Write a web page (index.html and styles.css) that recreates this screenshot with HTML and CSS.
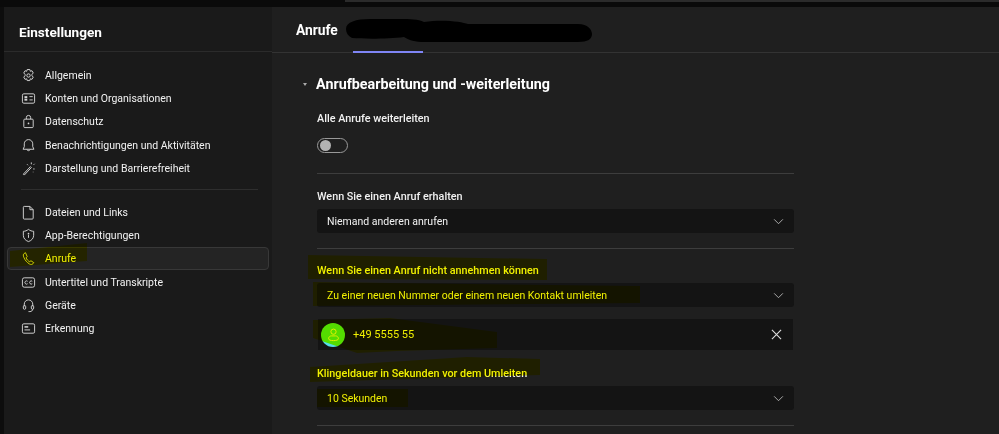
FILE: index.html
```html
<!DOCTYPE html>
<html lang="de">
<head>
    <meta charset="UTF-8">
    <title>Einstellungen</title>
    <link rel="stylesheet" href="styles.css">
</head>
<body>
    <div class="topbar"><div class="topbar-line"></div></div>
    <div class="window">
        <aside class="sidebar">
            <h1 class="sidebar-title">Einstellungen</h1>
            <nav class="nav">
                <a class="nav-item"><svg class="nav-icon" viewBox="0 0 16 16"><path d="M6.6 1.6h2.8l.5 1.9 1.8-.6 1.4 2.4-1.4 1.4v1.6l1.4 1.4-1.4 2.4-1.8-.6-.5 1.9H6.6l-.5-1.9-1.8.6-1.4-2.4 1.4-1.4V6.7L2.900 5.300l1.400-2.400 1.800.6z"/><circle cx="8" cy="8" r="1.800"/></svg>Allgemein</a>
                <a class="nav-item"><svg class="nav-icon" viewBox="0 0 16 16"><rect x="1.500" y="3" width="13" height="10" rx="1.500"/><rect class="solid" x="3.700" y="5.500" width="3" height="2.200"/><rect class="solid" x="3.700" y="8.300" width="3" height="2"/><path d="M9 6h3.500M9 9.500h3.500"/></svg>Konten und Organisationen</a>
                <a class="nav-item"><svg class="nav-icon" viewBox="0 0 16 16"><rect x="3" y="5.500" width="10" height="9" rx="1"/><path d="M5.700 5.500V3.800a2.300 2.300 0 0 1 4.600 0v1.700"/><circle class="solid" cx="8" cy="10" r=".9"/></svg>Datenschutz</a>
                <a class="nav-item"><svg class="nav-icon" viewBox="0 0 16 16"><path d="M8 1.700a4.500 4.500 0 0 0-4.500 4.500v3L2.200 12h11.600l-1.300-2.800v-3A4.500 4.500 0 0 0 8 1.700z"/><path d="M6.300 12.300a1.800 1.800 0 0 0 3.400 0"/></svg>Benachrichtigungen und Aktivitäten</a>
                <a class="nav-item"><svg class="nav-icon" viewBox="0 0 16 16"><path d="M2.500 14l7.500-8 1 1-7.500 8z"/><path d="M11 1.500v2M13.500 4l1-1M13 8.500h1.500M6.500 3.500l1 1M13 11.500v.5"/></svg>Darstellung und Barrierefreiheit</a>
                <hr class="nav-rule">
                <a class="nav-item"><svg class="nav-icon" viewBox="0 0 16 16"><path d="M3.500 1.500h6l3.500 3.500v9a1 1 0 0 1-1 1H3.500a1 1 0 0 1-1-1v-11.500a1 1 0 0 1 1-1z"/><path d="M9.500 1.500V5H13"/></svg>Dateien und Links</a>
                <a class="nav-item"><svg class="nav-icon" viewBox="0 0 16 16"><path d="M8 1.500c1.700 1.300 3.500 2 5.500 2v4.300c0 3.100-2 5.400-5.500 6.700-3.500-1.300-5.500-3.600-5.500-6.700V3.500c2 0 3.800-.7 5.500-2z"/><path d="M8 7.500v3" /><circle class="solid" cx="8" cy="6" r=".9"/></svg>App-Berechtigungen</a>
                <a class="nav-item active"><svg class="nav-icon" viewBox="0 0 16 16"><path d="M4.800 1.800L3.300 2.700C2.300 3.400 2.300 5 3 6.700c1.200 3 3.400 5.700 6.100 7.200 1.300.7 2.800.6 3.600-.3l.9-1.200-3-2-1.300 1C7.500 10.700 6.200 9 5.400 7.300l1.200-1.200z"/></svg>Anrufe</a>
                <a class="nav-item"><svg class="nav-icon" viewBox="0 0 16 16"><rect x="1.500" y="3" width="13" height="10" rx="2"/><path d="M7 6.700a1.700 1.700 0 1 0 0 2.600M12 6.700a1.700 1.700 0 1 0 0 2.600"/></svg>Untertitel und Transkripte</a>
                <a class="nav-item"><svg class="nav-icon" viewBox="0 0 16 16"><path d="M3.500 9V6.500a4.500 4.500 0 0 1 9 0V9"/><rect x="2.500" y="8" width="2.500" height="4" rx="1.200"/><rect x="11" y="8" width="2.500" height="4" rx="1.200"/><path d="M12.500 12c0 1.500-1.500 2.500-3 2.500H8"/></svg>Geräte</a>
                <a class="nav-item"><svg class="nav-icon" viewBox="0 0 16 16"><rect x="1.500" y="3" width="13" height="10" rx="1.500"/><rect class="solid" x="3.700" y="5.500" width="4" height="1.600"/><path d="M3.700 9.500h6"/></svg>Erkennung</a>
            </nav>
        </aside>
        <main class="content">
            <header class="content-head">
                <h2 class="content-title">Anrufe</h2>
                <div class="tab-line"></div>
            </header>
            <section class="section">
                <h3 class="section-title"><span class="caret"></span>Anrufbearbeitung und -weiterleitung</h3>
                <div class="group group-toggle">
                    <div class="label">Alle Anrufe weiterleiten</div>
                    <div class="toggle"><span class="toggle-knob"></span></div>
                </div>
                <div class="group">
                    <div class="label">Wenn Sie einen Anruf erhalten</div>
                    <div class="select">Niemand anderen anrufen<svg class="chevron" viewBox="0 0 12 8"><path d="M1 1.500l5 5 5-5"/></svg></div>
                </div>
                <div class="group">
                    <div class="label">Wenn Sie einen Anruf nicht annehmen können</div>
                    <div class="select">Zu einer neuen Nummer oder einem neuen Kontakt umleiten<svg class="chevron" viewBox="0 0 12 8"><path d="M1 1.500l5 5 5-5"/></svg></div>
                    <div class="contact">
                        <div class="avatar"><svg viewBox="0 0 16 16"><circle cx="8" cy="5" r="2.800"/><path d="M2.800 12.500c0-2 1.500-3 3-3h4.400c1.500 0 3 1 3 3 0 1.300-2 2-5.200 2s-5.200-.7-5.200-2z"/></svg></div>
                        <span class="contact-number">+49 5555 55</span>
                        <svg class="close" viewBox="0 0 12 12"><path d="M1 1l10 10M11 1L1 11"/></svg>
                    </div>
                    <div class="label label-gap">Klingeldauer in Sekunden vor dem Umleiten</div>
                    <div class="select">10 Sekunden<svg class="chevron" viewBox="0 0 12 8"><path d="M1 1.500l5 5 5-5"/></svg></div>
                </div>
            </section>
        </main>
    </div>
    <!-- redaction and marker strokes drawn over the screenshot -->
    <svg class="redact" viewBox="0 0 999 434"><path d="M346 29c0-7 10-10 24-10h30c10 0 18 0 24 3 20-3 38 0 44 2h110c10 0 14 6 14 10 0 5-4 8-14 8H424c-8 0-16-2-20-5-15 2-40 2-52 1-4-2-6-5-6-9z"/></svg>
    <svg class="marker" viewBox="0 0 999 434">
        <path d="M10 251l77-8v18l-77 6z"/>
        <path d="M308 255l239 4v21l-239-1z"/>
        <path d="M313 282l327 4v17l-327 3z"/>
        <path d="M313 320l77-2 107 14v16l-100 3-40 2-44-15z"/>
        <path d="M310 367l157-10 73 2v16l-230 7z"/>
        <path d="M317 389h91v18h-91z"/>
    </svg>
</body>
</html>
```

FILE: styles.css
```css
* {
    box-sizing: border-box;
}

body {
    margin: 0;
    width: 999px;
    height: 434px;
    overflow: hidden;
    position: relative;
    background: #1f1f1f;
    color: #f0f0f0;
    font-family: Roboto, "Noto Sans", Arial, sans-serif;
    font-size: 10.500px;
}

.topbar {
    height: 7px;
    background: #0a0a0a;
}

.topbar-line {
    height: 2px;
    margin-left: 345px;
    background: #2b2b2b;
}

.window {
    display: flex;
    height: 427px;
    border-left: 4px solid #0d0d0d;
}

.sidebar {
    width: 268px;
    flex-shrink: 0;
    background: #1a1a1a;
}

.sidebar-title {
    margin: 0;
    height: 45px;
    padding: 16px 0 0 15px;
    font-size: 13.600px;
    font-weight: 700;
    line-height: 18px;
    color: #fff;
    border-bottom: 1px solid #2b2b2b;
}

.nav {
    padding: 11.500px 3px 0;
}

.nav-item {
    display: flex;
    align-items: center;
    gap: 9.500px;
    height: 23.300px;
    padding-left: 12.500px;
    border: 1px solid transparent;
    border-radius: 4px;
    color: #f2f2f2;
}

.nav-item.active {
    background: #242424;
    border-color: #383838;
}

.nav-icon {
    width: 15px;
    height: 15px;
    flex-shrink: 0;
    fill: none;
    stroke: #d6d6d6;
    stroke-width: 1;
}

.nav-icon .solid {
    fill: #d6d6d6;
    stroke: none;
}

.nav-rule {
    margin: 9.500px 11px 10px 14px;
    border: 0;
    border-top: 1px solid #2e2e2e;
}

.content {
    flex: 1;
}

.content-head {
    height: 46px;
    padding: 14px 0 0 24px;
    position: relative;
    border-bottom: 1px solid #333;
}

.content-title {
    margin: 0;
    font-size: 13.800px;
    font-weight: 700;
    line-height: 18px;
    color: #fff;
}

.tab-line {
    position: absolute;
    left: 81px;
    bottom: -1px;
    width: 70px;
    height: 2px;
    background: #7f85f5;
}

.section {
    width: 522px;
    padding: 19px 0 0 45px;
}

.section-title {
    display: flex;
    align-items: center;
    margin: 0 0 16px -14px;
    font-size: 14.300px;
    font-weight: 700;
    line-height: 24px;
    color: #fff;
}

.caret {
    width: 0;
    height: 0;
    margin-right: 9px;
    border: 2.500px solid transparent;
    border-top: 3px solid #aaa;
    border-bottom: 0;
}

.group {
    padding-bottom: 15px;
    margin-bottom: 15px;
    border-bottom: 1px solid #3d3d3d;
}

.group-toggle {
    padding-bottom: 20px;
    margin-bottom: 16px;
}

.label {
    font-size: 10.800px;
    font-weight: 500;
    line-height: 14px;
    margin-bottom: 5px;
    color: #f2f2f2;
}

.label-gap {
    margin-top: 17px;
}

.toggle {
    width: 31px;
    height: 15px;
    margin-top: 12px;
    padding: 1px 2px;
    border: 1px solid #999;
    border-radius: 8px;
}

.toggle-knob {
    display: block;
    width: 11px;
    height: 11px;
    border-radius: 50%;
    background: #b3b3b3;
}

.select {
    display: flex;
    align-items: center;
    justify-content: space-between;
    height: 24px;
    padding: 0 10px;
    background: #141414;
    border-radius: 3px;
    color: #f2f2f2;
}

.chevron {
    width: 11px;
    height: 7px;
    fill: none;
    stroke: #bbb;
    stroke-width: 1;
}

.contact {
    display: flex;
    align-items: center;
    height: 31px;
    width: 475px;
    margin: 12px 0 0 1px;
    padding: 0 11px 0 3px;
    background: #141414;
}

.avatar {
    display: flex;
    align-items: center;
    justify-content: center;
    width: 24px;
    height: 24px;
    border-radius: 50%;
    background: #54dce6;
}

.avatar svg {
    width: 15px;
    height: 15px;
    fill: none;
    stroke: #e8f0a0;
    stroke-width: 1;
}

.contact-number {
    margin-left: 8px;
    flex: 1;
    font-size: 11px;
}

.close {
    width: 11px;
    height: 11px;
    fill: none;
    stroke: #ddd;
    stroke-width: 1.200;
}

.redact {
    position: absolute;
    top: 0;
    left: 0;
    width: 999px;
    height: 434px;
    fill: #000;
    pointer-events: none;
}

.marker {
    position: absolute;
    top: 0;
    left: 0;
    width: 999px;
    height: 434px;
    fill: #ff0;
    mix-blend-mode: multiply;
    pointer-events: none;
}
```
